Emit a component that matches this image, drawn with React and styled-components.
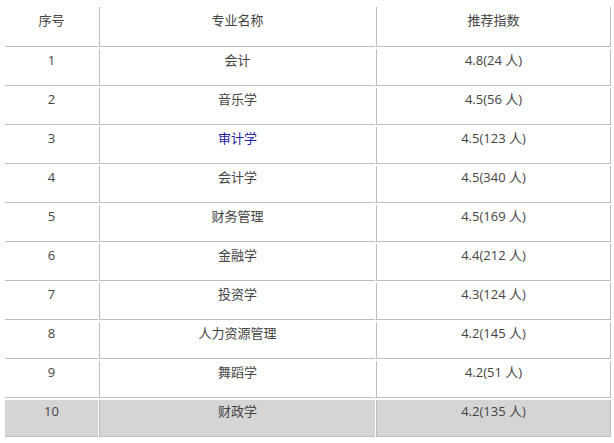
import React from "react";
import styled, { createGlobalStyle } from "styled-components";

const Global = createGlobalStyle`
  html, body { margin: 0; padding: 0; background: #fff; }
  body { font-family: "Open Sans", "Noto Sans CJK SC", sans-serif; }
`;

const Table = styled.table`
  border-collapse: separate;
  border-spacing: 1px 2px;
  margin: 5px 0 0 4px;
  width: 608px;
  table-layout: fixed;
  font-size: 13px;
  color: #444;
`;

const Col = styled.col`
  width: ${(p) => p.$w}px;
`;

const Cell = styled.td`
  box-sizing: border-box;
  height: 37px;
  padding: 1px 0 0 0;
  line-height: 20px;
  text-align: center;
  vertical-align: top;
  font-weight: 400;
  border-bottom: 1px solid #bdbdbd;
  border-left: ${(p) => (p.$first ? "none" : "1px solid #bdbdbd")};
  border-right: ${(p) => (p.$last ? "1px solid #bdbdbd" : "none")};
  background: ${(p) => (p.$shade ? "#d5d5d5" : "transparent")};
  color: ${(p) => (p.$link ? "#1c1ca8" : "inherit")};
  white-space: nowrap;
`;

const HeadCell = styled(Cell).attrs({ as: "th" })`
  height: 40px;
  padding-top: 3px;
`;

const rows = [
  ["1", "会计", "4.8(24 人)"],
  ["2", "音乐学", "4.5(56 人)"],
  ["3", "审计学", "4.5(123 人)", true],
  ["4", "会计学", "4.5(340 人)"],
  ["5", "财务管理", "4.5(169 人)"],
  ["6", "金融学", "4.4(212 人)"],
  ["7", "投资学", "4.3(124 人)"],
  ["8", "人力资源管理", "4.2(145 人)"],
  ["9", "舞蹈学", "4.2(51 人)"],
  ["10", "财政学", "4.2(135 人)"],
];

export default function App() {
  return (
    <>
      <Global />
      <Table>
        <colgroup>
          <Col $w={93} />
          <Col $w={276} />
          <Col $w={235} />
        </colgroup>
        <thead>
          <tr>
            <HeadCell $first>序号</HeadCell>
            <HeadCell>专业名称</HeadCell>
            <HeadCell $last>推荐指数</HeadCell>
          </tr>
        </thead>
        <tbody>
          {rows.map(([n, name, score, link], i) => {
            const shade = i === rows.length - 1;
            return (
              <tr key={n}>
                <Cell $first $shade={shade}>{n}</Cell>
                <Cell $shade={shade} $link={link}>{name}</Cell>
                <Cell $last $shade={shade}>{score}</Cell>
              </tr>
            );
          })}
        </tbody>
      </Table>
    </>
  );
}
